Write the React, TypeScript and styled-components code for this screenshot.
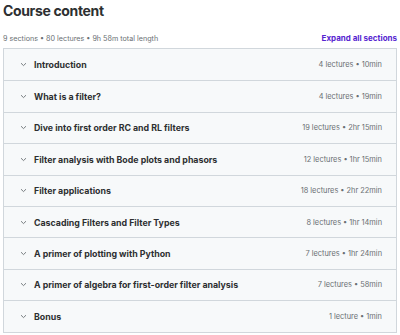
import React from "react";
import styled, { createGlobalStyle } from "styled-components";

const Global = createGlobalStyle`
  html, body { margin: 0; padding: 0; background: #fff; }
  body { font-family: Inter, "Noto Sans", sans-serif; color: #2d2f31; }
`;

const Page = styled.div`
  width: 400px;
  padding: 0 3px;
  box-sizing: border-box;
`;

const Title = styled.h2`
  margin: 0;
  padding-top: 2px;
  font-size: 14px;
  line-height: 18px;
  font-weight: 700;
  letter-spacing: -0.35px;
  color: #2d2f31;
`;

const Meta = styled.div`
  display: flex;
  justify-content: space-between;
  align-items: center;
  margin-top: 11px;
  height: 14px;
`;

const MetaText = styled.span`
  font-size: 7.2px;
  color: #6a6f73;
`;

const ExpandLink = styled.span`
  font-size: 8px;
  font-weight: 700;
  color: #5624d0;
`;

const Box = styled.div`
  margin-top: 3px;
  border: 1px solid #d1d7dc;
`;

const Row = styled.div`
  display: flex;
  align-items: center;
  height: 31.4px;
  box-sizing: border-box;
  padding: 0 14px 0 16px;
  background: #f7f9fa;
  & + & { border-top: 1px solid #d1d7dc; }
`;

const Chevron = styled.svg`
  width: 7px;
  height: 5px;
  flex: none;
  margin-right: 7px;
`;

const RowTitle = styled.span`
  flex: 1;
  font-size: 8.8px;
  font-weight: 700;
  color: #2d2f31;
`;

const RowMeta = styled.span`
  font-size: 7.4px;
  color: #6a6f73;
`;

const sections = [
  ["Introduction", "4 lectures • 10min"],
  ["What is a filter?", "4 lectures • 19min"],
  ["Dive into first order RC and RL filters", "19 lectures • 2hr 15min"],
  ["Filter analysis with Bode plots and phasors", "12 lectures • 1hr 15min"],
  ["Filter applications", "18 lectures • 2hr 22min"],
  ["Cascading Filters and Filter Types", "8 lectures • 1hr 14min"],
  ["A primer of plotting with Python", "7 lectures • 1hr 24min"],
  ["A primer of algebra for first-order filter analysis", "7 lectures • 58min"],
  ["Bonus", "1 lecture • 1min"],
];

export default function App() {
  return (
    <Page>
      <Global />
      <Title>Course content</Title>
      <Meta>
        <MetaText>9 sections • 80 lectures • 9h 58m total length</MetaText>
        <ExpandLink>Expand all sections</ExpandLink>
      </Meta>
      <Box>
        {sections.map(([t, m]) => (
          <Row key={t}>
            <Chevron viewBox="0 0 7 5">
              <path d="M1 1.2 L3.5 3.6 L6 1.2" fill="none" stroke="#6a6f73" strokeWidth="0.9" />
            </Chevron>
            <RowTitle>{t}</RowTitle>
            <RowMeta>{m}</RowMeta>
          </Row>
        ))}
      </Box>
    </Page>
  );
}
